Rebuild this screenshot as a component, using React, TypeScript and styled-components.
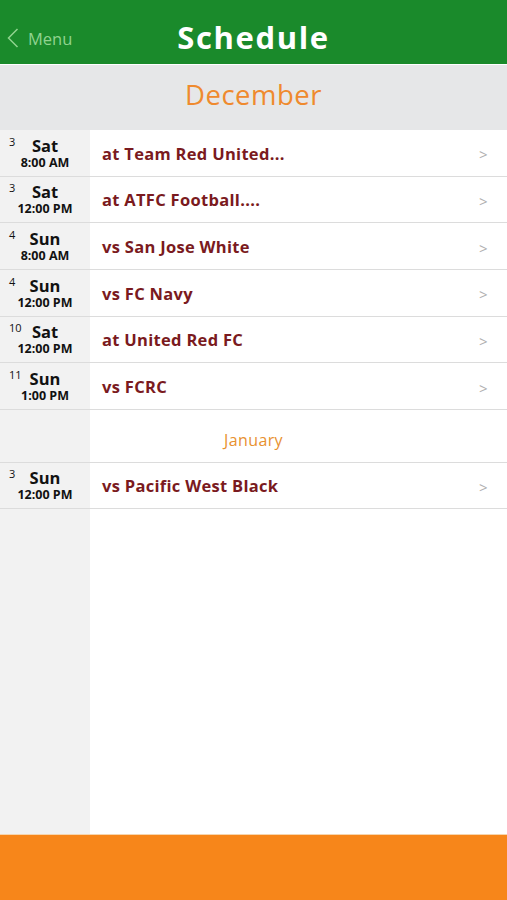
import styled, { createGlobalStyle } from "styled-components";

const GlobalStyle = createGlobalStyle`
  html, body {
    margin: 0;
    padding: 0;
    height: 100%;
  }
  body {
    font-family: "Open Sans", "Liberation Sans", sans-serif;
  }
  #root {
    height: 100%;
  }
`;

const Screen = styled.div`
  height: 900px;
  width: 507px;
  display: flex;
  flex-direction: column;
  overflow: hidden;
`;

const TopBar = styled.div`
  height: 64px;
  background-color: #1a8a2b;
  display: grid;
  grid-template-columns: 1fr auto 1fr;
  align-items: center;
  flex-shrink: 0;
`;

const BackButton = styled.div`
  display: flex;
  align-items: center;
  gap: 9px;
  padding-left: 7px;
  color: #90d38f;
  font-size: 16.5px;
  padding-top: 12px;
`;

const Title = styled.div`
  color: #ffffff;
  font-size: 31px;
  font-weight: 700;
  letter-spacing: 1.6px;
  padding-top: 10px;
`;

const MonthBanner = styled.div`
  height: 65px;
  margin-top: 1px;
  background-color: #e6e7e8;
  display: flex;
  justify-content: center;
  align-items: center;
  color: #ef8a2e;
  font-size: 27.5px;
  letter-spacing: 0.5px;
  padding-bottom: 6px;
  box-sizing: border-box;
  flex-shrink: 0;
`;

const List = styled.div`
  flex: 1;
  background: linear-gradient(to right, #f2f2f2 90px, #ffffff 90px);
`;

const Row = styled.div<{ $h: number }>`
  height: ${(p) => p.$h}px;
  box-sizing: border-box;
  border-bottom: 1px solid #dcdcdc;
  display: grid;
  grid-template-columns: 90px 1fr 28px;
  align-items: center;
`;

const DateCell = styled.div`
  position: relative;
  display: flex;
  flex-direction: column;
  align-items: center;
  color: #111;
  font-weight: 700;
  padding-top: 1px;
`;

const DayNum = styled.span`
  position: absolute;
  left: 9px;
  top: 0px;
  font-size: 11px;
  line-height: 11px;
  font-weight: 400;
`;

const DayName = styled.span`
  font-size: 16.5px;
  line-height: 18px;
`;

const Time = styled.span`
  font-size: 12.5px;
  line-height: 15px;
`;

const Opponent = styled.div`
  padding-left: 12px;
  color: #7a1a20;
  font-size: 16.5px;
  font-weight: 700;
  letter-spacing: 0.3px;
  padding-top: 1px;
`;

const Chevron = styled.div`
  color: #b0b0b0;
  font-size: 15px;
  padding-top: 3px;
`;

const SubMonth = styled.div`
  grid-column: 1 / 4;
  text-align: center;
  color: #e8912f;
  font-size: 16px;
  letter-spacing: 0.4px;
  padding-top: 9px;
`;

const Footer = styled.div`
  height: 65px;
  flex-shrink: 0;
  background-color: #f7861a;
  border-top: 1px solid #f6d5ae;
`;

type Game = { num: string; day: string; time: string; title: string };

const december: Game[] = [
  { num: "3", day: "Sat", time: "8:00 AM", title: "at Team Red United..." },
  { num: "3", day: "Sat", time: "12:00 PM", title: "at ATFC Football...." },
  { num: "4", day: "Sun", time: "8:00 AM", title: "vs San Jose White" },
  { num: "4", day: "Sun", time: "12:00 PM", title: "vs FC Navy" },
  { num: "10", day: "Sat", time: "12:00 PM", title: "at United Red FC" },
  { num: "11", day: "Sun", time: "1:00 PM", title: "vs FCRC" },
];

const january: Game[] = [
  { num: "3", day: "Sun", time: "12:00 PM", title: "vs Pacific West Black" },
];

function GameRow({ g, h }: { g: Game; h: number }) {
  return (
    <Row $h={h}>
      <DateCell>
        <DayNum>{g.num}</DayNum>
        <DayName>{g.day}</DayName>
        <Time>{g.time}</Time>
      </DateCell>
      <Opponent>{g.title}</Opponent>
      <Chevron>&gt;</Chevron>
    </Row>
  );
}

export default function App() {
  return (
    <Screen>
      <GlobalStyle />
      <TopBar>
        <BackButton>
          <svg width="12" height="20" viewBox="0 0 12 20">
            <path d="M10.5 1 L1.5 10 L10.5 19" fill="none" stroke="#90d38f" strokeWidth="1.5" />
          </svg>
          Menu
        </BackButton>
        <Title>Schedule</Title>
        <div />
      </TopBar>
      <MonthBanner>December</MonthBanner>
      <List>
        {december.map((g, i) => (
          <GameRow key={i} g={g} h={46.67} />
        ))}
        <Row $h={53}>
          <SubMonth>January</SubMonth>
        </Row>
        {january.map((g, i) => (
          <GameRow key={i} g={g} h={46} />
        ))}
      </List>
      <Footer />
    </Screen>
  );
}
